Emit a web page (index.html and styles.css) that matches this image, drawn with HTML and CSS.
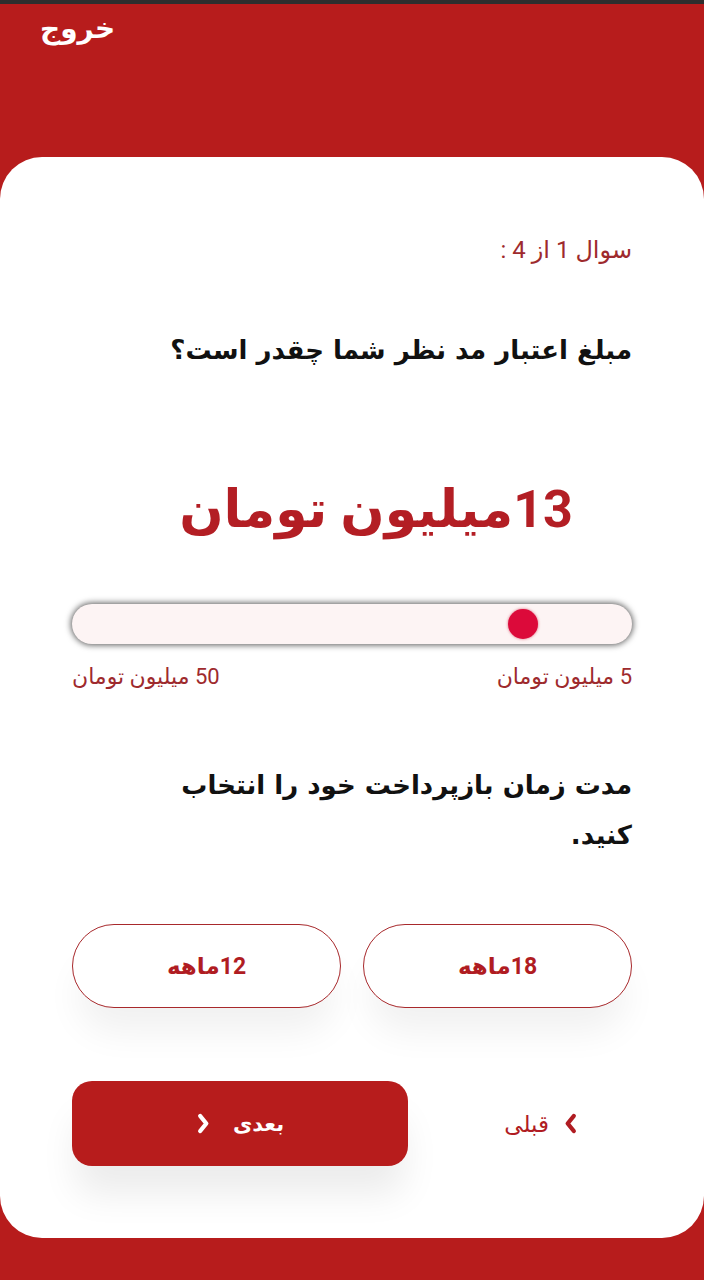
FILE: index.html
```html
<!DOCTYPE html>
<html lang="fa" dir="rtl">
<head>
<meta charset="utf-8">
<title>سوال</title>
<link rel="stylesheet" href="styles.css">
</head>
<body>
<div class="statusbar"></div>
<header class="header">
  <span class="exit">خروج</span>
</header>
<main class="card">
  <p class="step">سوال 1 از 4 :</p>
  <h2 class="question">مبلغ اعتبار مد نظر شما چقدر است؟</h2>
  <div class="amount">13میلیون تومان</div>
  <div class="slider">
    <span class="thumb" style="right: calc((100% - 30px) * 0.178)"></span>
  </div>
  <div class="range-labels">
    <span>5 میلیون تومان</span>
    <span>50 میلیون تومان</span>
  </div>
  <h2 class="question q2">مدت زمان بازپرداخت خود را انتخاب کنید.</h2>
  <div class="options">
    <button class="option">18ماهه</button>
    <button class="option">12ماهه</button>
  </div>
  <div class="nav">
    <button class="prev">
      <svg class="chev" viewBox="0 0 16 24" width="15" height="23"><path d="M11.5 4 L5 12 L11.5 20" fill="none" stroke="currentColor" stroke-width="4.6" stroke-linecap="round" stroke-linejoin="round"/></svg>
      <span>قبلی</span>
    </button>
    <button class="next">
      <span>بعدی</span>
      <svg class="chev" viewBox="0 0 16 24" width="15" height="23"><path d="M4.5 4 L11 12 L4.5 20" fill="none" stroke="currentColor" stroke-width="4.6" stroke-linecap="round" stroke-linejoin="round"/></svg>
    </button>
  </div>
</main>
</body>
</html>
```

FILE: styles.css
```css
* { box-sizing: border-box; }
html, body { margin: 0; padding: 0; }
body {
  width: 704px;
  height: 1280px;
  background: #b71c1c;
  font-family: Roboto, "DejaVu Sans", sans-serif;
  direction: rtl;
  overflow: hidden;
}
.statusbar {
  height: 4px;
  background: #2e2e2e;
}
.header {
  height: 153px;
  padding: 6px 40px 0;
  text-align: left;
}
.exit {
  color: #fff;
  font-weight: bold;
  font-size: 28px;
  line-height: 38px;
  font-family: "DejaVu Sans", sans-serif;
}
.card {
  background: #fff;
  border-radius: 42px;
  height: 1081px;
  padding: 78px 72px 0;
  display: flex;
  flex-direction: column;
}
.step {
  margin: 0;
  color: #9e2a2d;
  font-size: 24px;
  line-height: 30px;
}
.question {
  margin: 65px 0 0;
  color: #111;
  font-weight: bold;
  font-size: 26px;
  line-height: 40px;
  font-family: "DejaVu Sans", sans-serif;
}
.amount {
  margin-top: 105px;
  margin-left: 48px;
  text-align: center;
  color: #b31e24;
  font-weight: bold;
  font-size: 52px;
  line-height: 70px;
}
.slider {
  position: relative;
  margin-top: 59px;
  height: 40px;
  border-radius: 20px;
  background: #fdf4f4;
  box-shadow: 0 0 6px 1px rgba(0, 0, 0, 0.65);
}
.thumb {
  position: absolute;
  top: 5px;
  width: 30px;
  height: 30px;
  border-radius: 50%;
  background: #dc0a3a;
  box-shadow: 0 0 3px rgba(200, 0, 40, 0.6);
}
.range-labels {
  margin-top: 19px;
  display: flex;
  justify-content: space-between;
  color: #9e2a2d;
  font-size: 22px;
  line-height: 28px;
}
.q2 {
  margin-top: 69px;
  line-height: 50px;
  max-width: 480px;
}
.options {
  margin-top: 64px;
  display: flex;
  gap: 22px;
}
.option {
  flex: 1;
  height: 84px;
  border: 1px solid #a8292c;
  border-radius: 42px;
  background: #fff;
  color: #b01c22;
  font-family: Roboto, "DejaVu Sans", sans-serif;
  font-weight: bold;
  font-size: 23px;
  box-shadow: 0 30px 36px -6px rgba(0, 0, 0, 0.06);
}
.nav {
  margin-top: 73px;
  display: flex;
  align-items: center;
  justify-content: space-between;
}
.prev {
  display: flex;
  align-items: center;
  gap: 14px;
  margin-right: 54px;
  background: none;
  border: none;
  color: #b01c22;
  font-family: "DejaVu Sans", sans-serif;
  font-size: 23px;
  padding: 0;
}
.next {
  width: 336px;
  height: 85px;
  display: flex;
  align-items: center;
  justify-content: center;
  gap: 22px;
  border: none;
  border-radius: 20px;
  background: #b71c1c;
  color: #fff;
  font-family: "DejaVu Sans", sans-serif;
  font-weight: bold;
  font-size: 21px;
  box-shadow: 0 32px 36px -4px rgba(0, 0, 0, 0.08);
}
.chev { display: block; }
```
